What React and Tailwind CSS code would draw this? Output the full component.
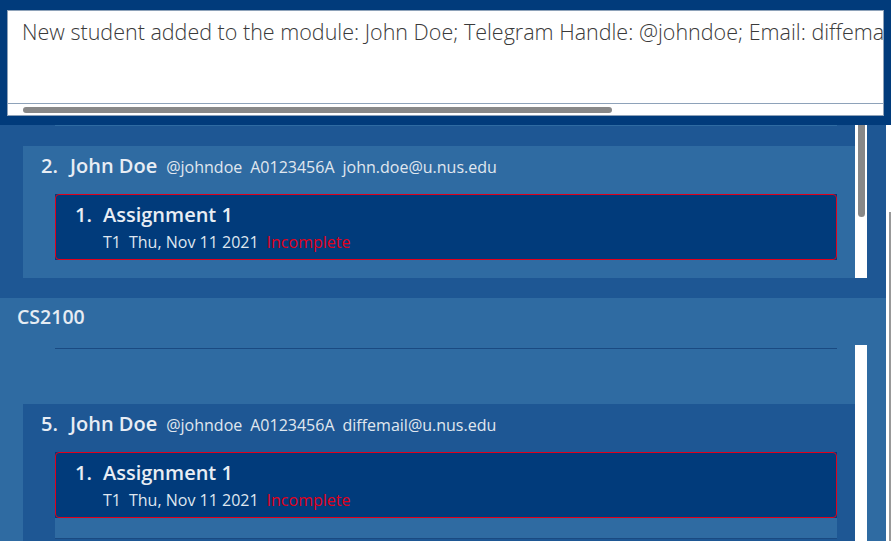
const font = { fontFamily: '"Open Sans", "Noto Sans", sans-serif' };

function Assignment() {
  return (
    <div className="w-[782px] h-[87px] bg-[#2f6ba2] border-b border-[#1a4a82]">
      <div className="bg-[#013b7b]">
        <div className="h-[66px] border border-solid border-[#e0001b] rounded-[4px] pt-[7px] pl-[19px]">
          <div className="flex items-baseline leading-[26px] text-[20px] font-semibold text-[#e8edf4]">
            <span className="w-[28px]">1.</span>
            <span>Assignment 1</span>
          </div>
          <div className="flex items-baseline gap-[8px] mt-[3px] pl-[28px] leading-[22px] text-[16px] text-[#dfe6ef]">
            <span>T1</span>
            <span>Thu, Nov 11 2021</span>
            <span className="text-[#e3001b]">Incomplete</span>
          </div>
        </div>
      </div>
    </div>
  );
}

function StudentCard({ index, email, bg }) {
  return (
    <div className={`w-[832px] pt-[6px] pl-[18px] ${bg}`}>
      <div className="flex items-baseline leading-[28px] text-[#e8edf4]">
        <span className="w-[29px] text-[20px] font-semibold">{index}.</span>
        <span className="text-[20px] font-semibold mr-[9px]">John Doe</span>
        <div className="flex items-baseline gap-[8px] text-[16px] text-[#e0e7ef]">
          <span>@johndoe</span>
          <span>A0123456A</span>
          <span>{email}</span>
        </div>
      </div>
      <div className="mt-[13px] ml-[14px] pb-[19px]">
        <Assignment />
      </div>
    </div>
  );
}

export default function App() {
  return (
    <div className="w-[891px] h-[541px] overflow-hidden bg-[#1e5794] flex flex-col" style={font}>
      {/* command result */}
      <div className="h-[125px] shrink-0 bg-[#013b7b] px-[7px] pt-[10px]">
        <div className="h-[106px] bg-white border border-[#8ea2b9] flex flex-col">
          <div className="h-[92px] overflow-hidden whitespace-nowrap pt-[7px] pl-[14px] text-[21.5px] leading-[28px] font-light text-[#3a3a3a]">
            New student added to the module: John Doe; Telegram Handle: @johndoe; Email: diffemail@u.nus.edu
          </div>
          <div className="h-px bg-[#8ea2b9]" />
          <div className="flex-1 pt-[3px] pl-[15px]">
            <div className="w-[589px] h-[6px] rounded-full bg-[#888888]" />
          </div>
        </div>
      </div>

      <div className="flex flex-1 min-h-0">
        <div className="w-[886px] flex flex-col">
          {/* module 1 (scrolled) */}
          <div className="h-[173px] shrink-0 bg-[#1e5794] flex">
            <div className="w-[23px]" />
            <div className="w-[832px] h-[153px] overflow-hidden">
              <div className="ml-[32px] w-[782px] h-px bg-[#2f6ba2]" />
              <div className="h-[20px]" />
              <StudentCard index={2} email="john.doe@u.nus.edu" bg="bg-[#2f6ba2]" />
            </div>
            <div className="w-[12px] h-[153px] bg-white pl-[3px]">
              <div className="w-[7px] h-[92px] bg-[#888888] rounded-b-full" />
            </div>
          </div>

          {/* module CS2100 */}
          <div className="flex-1 bg-[#2f6ba2] flex flex-col min-h-0">
            <div className="h-[47px] shrink-0 pl-[17px] pt-[6px] text-[19.5px] leading-[26px] font-semibold text-[#e6ecf3]">
              CS2100
            </div>
            <div className="flex flex-1 min-h-0">
              <div className="w-[23px]" />
              <div className="w-[832px] overflow-hidden">
                <div className="h-[3px]" />
                <div className="ml-[32px] w-[782px] h-px bg-[#1a4a82]" />
                <div className="h-[55px]" />
                <StudentCard index={5} email="diffemail@u.nus.edu" bg="bg-[#1e5794]" />
              </div>
              <div className="w-[12px] bg-white" />
            </div>
          </div>
        </div>

        {/* outer scrollbar */}
        <div className="w-[5px] bg-white pl-[3px] pt-[87px]">
          <div className="w-[2px] h-full bg-[#999999]" />
        </div>
      </div>
    </div>
  );
}
